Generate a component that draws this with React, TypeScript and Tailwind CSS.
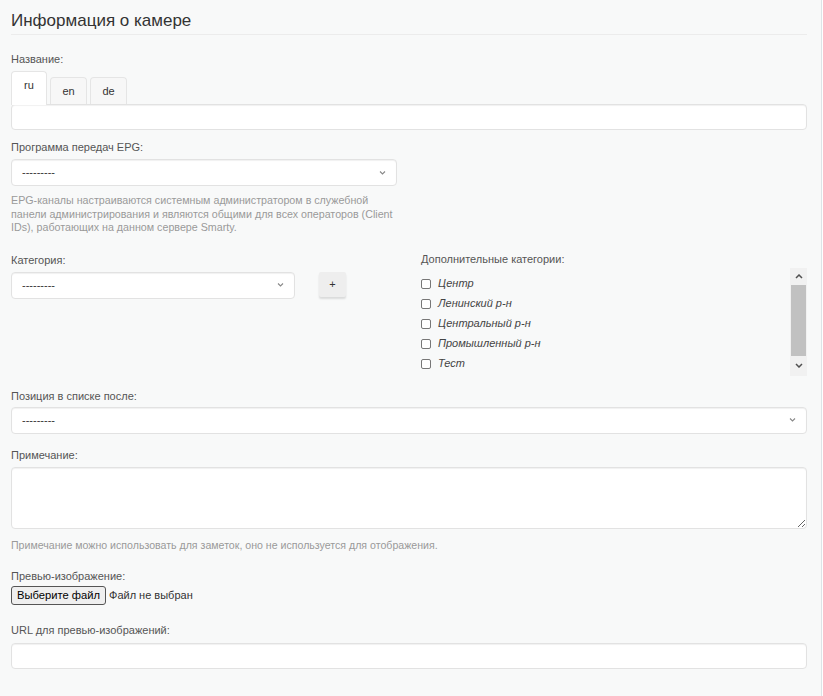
import React from 'react';

const font = { fontFamily: '"Liberation Sans", Arial, sans-serif' };

const Chevron: React.FC = () => (
  <svg
    className="pointer-events-none absolute right-[11px] top-1/2 -translate-y-1/2"
    width="7"
    height="5"
    viewBox="0 0 7 5"
    fill="none"
  >
    <path d="M1 1l2.5 2.5L6 1" stroke="#888" strokeWidth="1.1" />
  </svg>
);

const Select: React.FC<{ className?: string }> = ({ className = '' }) => (
  <div className={`relative ${className}`}>
    <select className="h-full w-full appearance-none rounded-[4px] border border-[#e2e2e2] bg-white pl-[10px] text-[11px] text-[#333] shadow-[inset_0_1px_1px_rgba(0,0,0,0.06)] outline-none">
      <option>---------</option>
    </select>
    <Chevron />
  </div>
);

const Label: React.FC<{ children: React.ReactNode; className?: string }> = ({ children, className = '' }) => (
  <div className={`text-[11px] leading-[13px] text-[#555] ${className}`}>{children}</div>
);

const inputCls =
  'block w-full rounded-[4px] border border-[#e2e2e2] bg-white shadow-[inset_0_1px_1px_rgba(0,0,0,0.06)] outline-none';

const categories = ['Центр', 'Ленинский р-н', 'Центральный р-н', 'Промышленный р-н', 'Тест'];

const App: React.FC = () => {
  return (
    <div className="min-h-screen w-[822px] border-r border-[#dde4e7] bg-[#f8f9f9]" style={font}>
      <div className="w-[807px] pl-[11px] pb-[26px]">
        {/* Title */}
        <div className="border-b border-[#ececec] pt-[10px] pb-[2px]">
          <h1 className="text-[17px] leading-[22px] text-[#333]">Информация о камере</h1>
        </div>

        {/* Name */}
        <Label className="mt-[18px]">Название:</Label>
        <div className="mt-[5px] flex items-end gap-[3px]">
          <div className="relative z-10 -mb-px h-[34px] w-[36px] rounded-t-[4px] border border-b-0 border-[#e5e5e5] bg-white pt-[7px] text-center text-[11px] leading-[13px] text-[#333]">
            ru
          </div>
          <div className="h-[27px] w-[37px] rounded-t-[4px] border border-b-0 border-[#e5e5e5] bg-[#f7f7f7] pt-[7px] text-center text-[11px] leading-[13px] text-[#333]">
            en
          </div>
          <div className="h-[27px] w-[37px] rounded-t-[4px] border border-b-0 border-[#e5e5e5] bg-[#f7f7f7] pt-[7px] text-center text-[11px] leading-[13px] text-[#333]">
            de
          </div>
        </div>
        <input className={`${inputCls} h-[26px]`} />

        {/* EPG */}
        <Label className="mt-[11px]">Программа передач EPG:</Label>
        <Select className="mt-[5px] h-[27px] w-[386px]" />
        <p className="mt-[8px] w-[382px] text-[10.7px] leading-[13.5px] text-[#9a9a9a]">
          EPG-каналы настраиваются системным администратором в служебной панели администрирования и являются общими для всех
          операторов (Client IDs), работающих на данном сервере Smarty.
        </p>

        {/* Category + additional */}
        <div className="mt-[19px] flex">
          <div className="w-[410px]">
            <Label>Категория:</Label>
            <div className="mt-[5px] flex items-start">
              <Select className="h-[27px] w-[284px]" />
              <button className="ml-[24px] h-[25px] w-[27px] rounded-[2px] bg-[#eeeeee] text-[11px] leading-[20px] text-[#333] shadow-[0_2px_2px_rgba(0,0,0,0.12)]">
                +
              </button>
            </div>
          </div>
          <div className="flex-1">
            <Label className="-mt-px">Дополнительные категории:</Label>
            <div className="mt-[2px] flex h-[108px]">
              <div className="flex-1 overflow-hidden pt-[6px]">
                {categories.map((c) => (
                  <div key={c} className="flex h-[20px] items-center">
                    <span className="h-[10px] w-[10px] rounded-[2px] border border-[#777] bg-white" />
                    <span className="ml-[7px] text-[11px] italic text-[#444]">{c}</span>
                  </div>
                ))}
              </div>
              {/* scrollbar */}
              <div className="flex w-[17px] flex-col bg-[#f1f1f1]">
                <div className="flex h-[17px] items-center justify-center">
                  <svg width="8" height="5" viewBox="0 0 8 5" fill="none">
                    <path d="M1 4l3-3 3 3" stroke="#505050" strokeWidth="1.5" />
                  </svg>
                </div>
                <div className="mx-[1px] h-[71px] bg-[#c1c1c1]" />
                <div className="flex flex-1 items-center justify-center">
                  <svg width="8" height="5" viewBox="0 0 8 5" fill="none">
                    <path d="M1 1l3 3 3-3" stroke="#505050" strokeWidth="1.5" />
                  </svg>
                </div>
              </div>
            </div>
          </div>
        </div>

        {/* Position */}
        <Label className="mt-[14px]">Позиция в списке после:</Label>
        <Select className="mt-[4px] h-[27px] w-full" />

        {/* Note */}
        <Label className="mt-[15px]">Примечание:</Label>
        <textarea className={`${inputCls} mt-[5px] h-[62px]`} />
        <p className="mt-[10px] text-[10.6px] leading-[13px] text-[#9a9a9a]">
          Примечание можно использовать для заметок, оно не используется для отображения.
        </p>

        {/* Preview */}
        <Label className="mt-[18px]">Превью-изображение:</Label>
        <div className="mt-[3px] flex items-center">
          <button className="h-[19px] rounded-[3px] border border-[#555] bg-[#efefef] px-[5px] text-[11.2px] leading-[15px] text-black">
            Выберите файл
          </button>
          <span className="ml-[3px] text-[11px] text-[#333]">Файл не выбран</span>
        </div>

        {/* URL */}
        <Label className="mt-[19px]">URL для превью-изображений:</Label>
        <input className={`${inputCls} mt-[6px] h-[26px]`} />
      </div>
    </div>
  );
};

export default App;
